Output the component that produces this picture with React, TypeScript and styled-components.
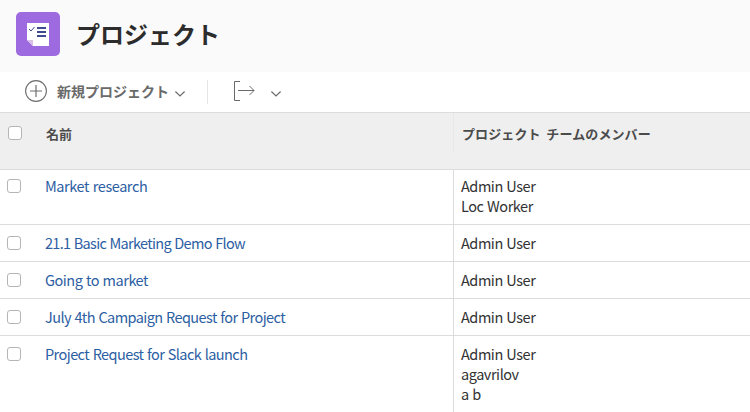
import React from "react";
import styled, { createGlobalStyle } from "styled-components";

const GlobalStyle = createGlobalStyle`
  * { box-sizing: border-box; }
  body {
    margin: 0;
    overflow: hidden;
    background: #fff;
    font-family: "Noto Sans CJK JP", "Noto Sans", sans-serif;
  }
`;

const Page = styled.main`
  display: flex;
  flex-direction: column;
  height: 412px;
  overflow: hidden;
`;

const Header = styled.header`
  display: flex;
  flex: none;
  align-items: flex-start;
  height: 72px;
  padding: 12px 16px;
  background: #fafafa;
`;

const Title = styled.h1`
  margin: 4px 0 0 16px;
  font-size: 24px;
  line-height: 36px;
  font-weight: 700;
  color: #2c2c2c;
  white-space: nowrap;
`;

const Toolbar = styled.div`
  display: flex;
  flex: none;
  align-items: center;
  height: 40px;
  padding-left: 25px;
`;

const ToolButton = styled.button`
  display: flex;
  align-items: center;
  height: 22px;
  padding: 0;
  margin-top: -2px;
  border: 0;
  background: none;
  color: #6a6a6a;
  font: 700 14px/20px "Noto Sans CJK JP", sans-serif;
  white-space: nowrap;
`;

const ToolLabel = styled.span`
  margin: 0 6px 0 10px;
`;

const Divider = styled.span`
  width: 1px;
  height: 24px;
  margin: 0 26px 0 22px;
  background: #e6e6e6;
`;

const Icon = styled.svg<{ $gap?: number; $drop?: number }>`
  display: block;
  flex: none;
  margin-left: ${(p) => p.$gap ?? 0}px;
  margin-top: ${(p) => p.$drop ?? 0}px;
`;

const Row = styled.div<{ $height: number; $head?: boolean }>`
  display: grid;
  grid-template-columns: 453px 1fr;
  flex: none;
  height: ${(p) => p.$height}px;
  background: ${(p) => (p.$head ? "#efefef" : "#fff")};
  border-top: ${(p) => (p.$head ? "1px solid #dcdcdc" : "0")};
  border-bottom: 1px solid #dcdcdc;
`;

const NameCell = styled.div<{ $top: number; $left: number }>`
  display: flex;
  align-items: flex-start;
  padding: ${(p) => p.$top}px 0 0 ${(p) => p.$left}px;
`;

const Checkbox = styled.span`
  flex: none;
  width: 14px;
  height: 14px;
  margin-top: 2px;
  border: 1px solid #b5b5b5;
  border-radius: 3px;
  background: #fff;
`;

const HeadText = styled.span<{ $indent: number }>`
  display: block;
  margin-left: ${(p) => p.$indent}px;
  font-size: 13px;
  line-height: 20px;
  font-weight: 700;
  letter-spacing: 0.12px;
  word-spacing: 2.5px;
  color: #4b4b4b;
  white-space: nowrap;
`;

const MembersHead = styled.div`
  height: 40px;
  padding-top: 11px;
  border-left: 1px solid #e8e8e8;
`;

const ProjectLink = styled.a<{ $spacing: number }>`
  margin: -1px 0 0 24px;
  font-size: 14.5px;
  line-height: 20px;
  letter-spacing: ${(p) => p.$spacing}px;
  word-spacing: 0.8px;
  color: #2c5ea3;
  white-space: nowrap;
`;

const Members = styled.div<{ $top: number }>`
  padding: ${(p) => p.$top - 1}px 0 0 7px;
  border-left: 1px solid #dcdcdc;
`;

const Member = styled.div`
  font-size: 14.5px;
  line-height: 20px;
  letter-spacing: -0.46px;
  word-spacing: 0.8px;
  color: #323232;
`;

const projects = [
  { name: "Market research", members: ["Admin User", "Loc Worker"], height: 55, top: 7, spacing: -0.42 },
  { name: "21.1 Basic Marketing Demo Flow", members: ["Admin User"], height: 37, top: 9, spacing: -0.69 },
  { name: "Going to market", members: ["Admin User"], height: 37, top: 9, spacing: -0.48 },
  { name: "July 4th Campaign Request for Project", members: ["Admin User"], height: 37, top: 9, spacing: -0.58 },
  { name: "Project Request for Slack launch", members: ["Admin User", "agavrilov", "a b"], height: 95, top: 9, spacing: -0.57 },
];

const ProjectIcon = () => (
  <Icon width="44" height="44" viewBox="0 0 44 44">
    <rect width="44" height="44" rx="5" fill="#9d6adf" />
    <path d="M11 11h22v23H17l-6-6z" fill="#fff" />
    <path d="M11 28h6v6z" fill="#d8c0ea" />
    <path d="M13 17l2 2 3.5-4" fill="none" stroke="#3e4b91" strokeWidth="1" />
    <path d="M21 16h9M21 20h9M21 24h9" stroke="#3e4b91" strokeWidth="2" />
  </Icon>
);

const AddIcon = () => (
  <Icon width="22" height="22" viewBox="0 0 22 22" fill="none" stroke="#6e6e6e">
    <circle cx="11" cy="11" r="10.4" strokeWidth="1.1" />
    <path d="M5 11h12M11 5v12" strokeWidth="1.2" />
  </Icon>
);

const Chevron = ({ gap = 0 }: { gap?: number }) => (
  <Icon $gap={gap} $drop={6} width="10" height="6" viewBox="0 0 10 6">
    <path d="M.4.5L5 5 9.6.5" fill="none" stroke="#6a6a6a" strokeWidth="1.2" />
  </Icon>
);

const ExportIcon = () => (
  <Icon width="21" height="20" viewBox="0 0 21 20" fill="none" stroke="#6a6a6a">
    <path d="M6 .5H.5v19H6M4 9.5h16M15.5 5l4.5 4.5-4.5 4.5" strokeWidth="1" />
  </Icon>
);

export default function App() {
  return (
    <Page>
      <GlobalStyle />
      <Header>
        <ProjectIcon />
        <Title>プロジェクト</Title>
      </Header>
      <Toolbar>
        <ToolButton>
          <AddIcon />
          <ToolLabel>新規プロジェクト</ToolLabel>
          <Chevron />
        </ToolButton>
        <Divider />
        <ToolButton>
          <ExportIcon />
          <Chevron gap={16} />
        </ToolButton>
      </Toolbar>
      <Row $height={58} $head>
        <NameCell $top={11} $left={8}>
          <Checkbox />
          <HeadText $indent={24}>名前</HeadText>
        </NameCell>
        <MembersHead>
          <HeadText $indent={8}>プロジェクト チームのメンバー</HeadText>
        </MembersHead>
      </Row>
      {projects.map((p) => (
        <Row key={p.name} $height={p.height}>
          <NameCell $top={p.top} $left={7}>
            <Checkbox />
            <ProjectLink $spacing={p.spacing}>{p.name}</ProjectLink>
          </NameCell>
          <Members $top={p.top}>
            {p.members.map((m) => (
              <Member key={m}>{m}</Member>
            ))}
          </Members>
        </Row>
      ))}
    </Page>
  );
}
